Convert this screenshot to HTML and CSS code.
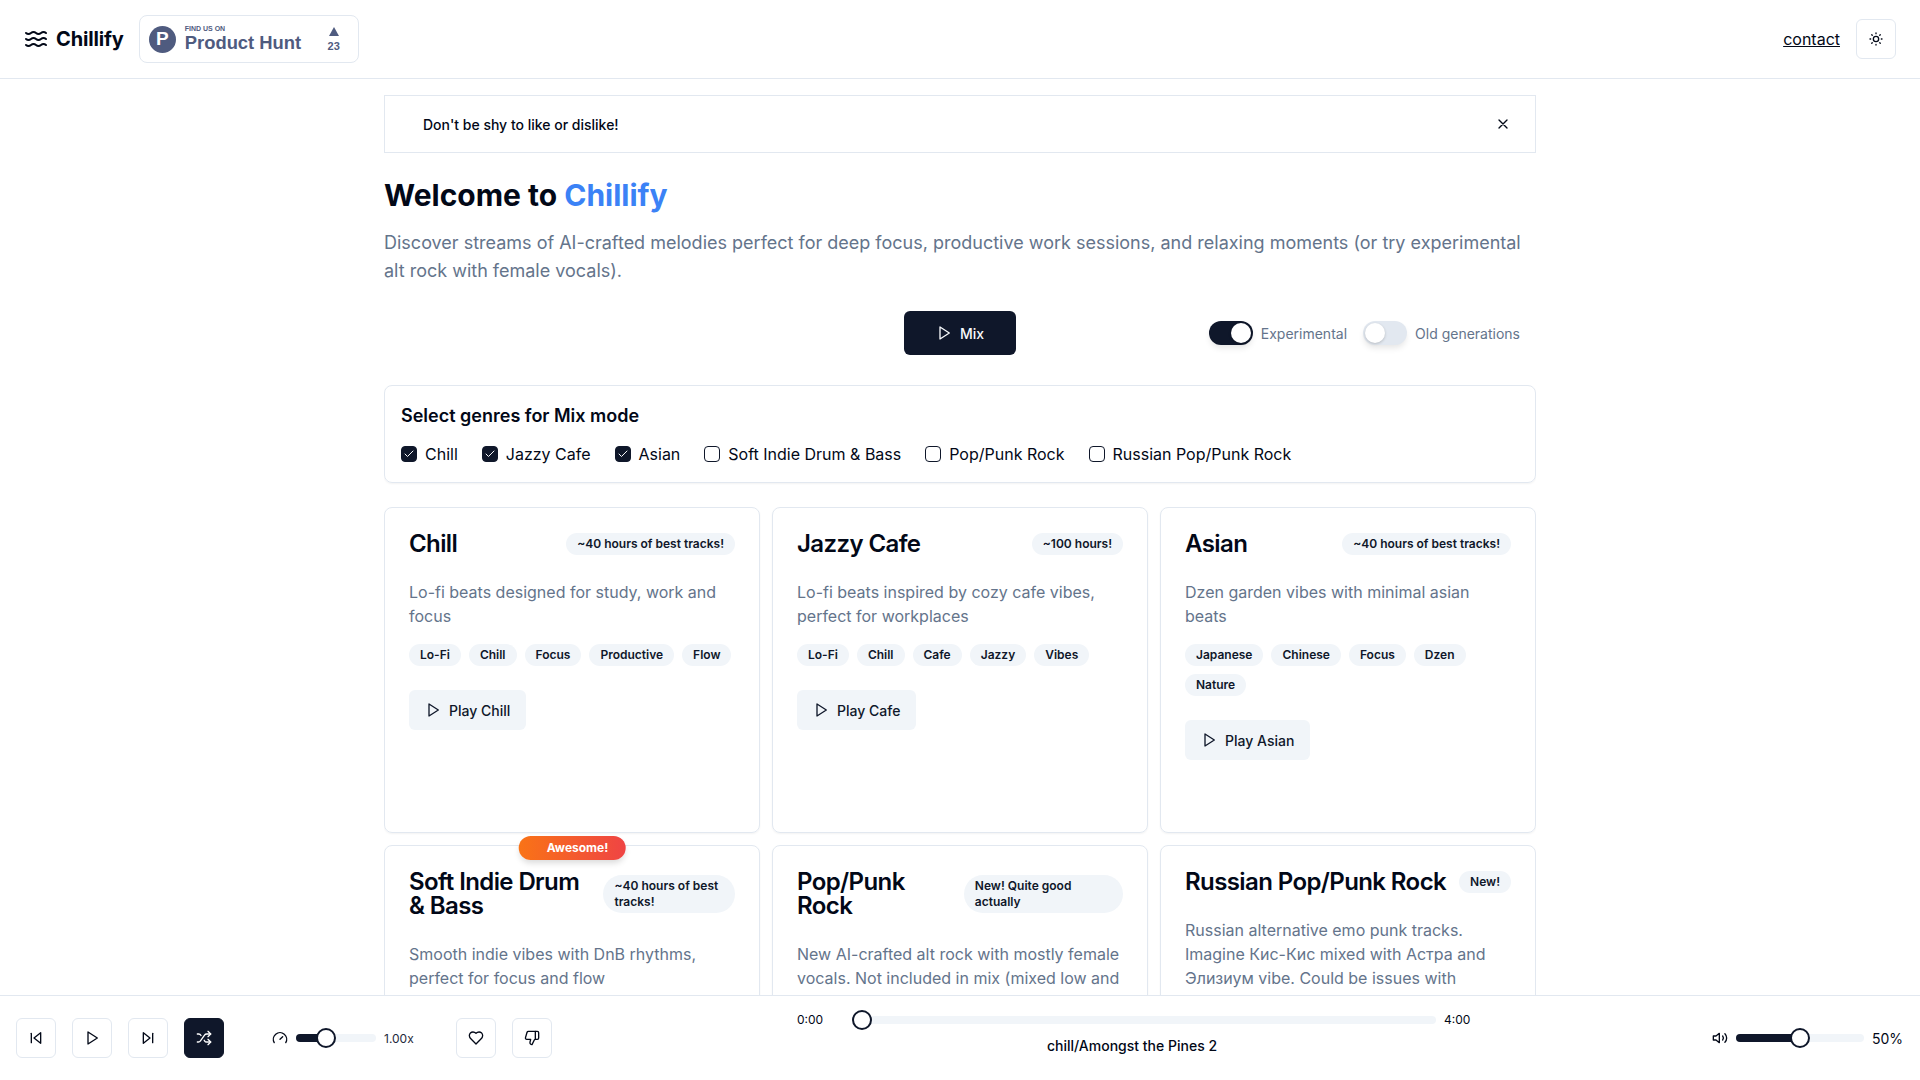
FILE: index.html
```html
<!DOCTYPE html>
<html>
<head>
  <meta charset="utf-8">
  <meta name="viewport" content="width=device-width">
  <title>Chillify</title>
  <link rel="stylesheet" href="styles.css">
</head>
<body>
  <svg class="sprite" aria-hidden="true">
    <symbol id="i-waves" viewBox="0 0 24 24"><path d="M2 6c.6.5 1.2 1 2.5 1C7 7 7 5 9.5 5c2.6 0 2.4 2 5 2 2.5 0 2.5-2 5-2 1.3 0 1.9.5 2.5 1"/><path d="M2 12c.6.5 1.2 1 2.5 1 2.5 0 2.5-2 5-2 2.6 0 2.4 2 5 2 2.5 0 2.5-2 5-2 1.3 0 1.9.5 2.5 1"/><path d="M2 18c.6.5 1.2 1 2.5 1 2.5 0 2.5-2 5-2 2.6 0 2.4 2 5 2 2.5 0 2.5-2 5-2 1.3 0 1.9.5 2.5 1"/></symbol>
    <symbol id="i-sun" viewBox="0 0 24 24"><circle cx="12" cy="12" r="4"/><path d="M12 3v1M12 20v1M3 12h1M20 12h1M5.64 5.64l.7.7M17.66 17.66l.7.7M5.64 18.36l.7-.7M17.66 6.34l.7-.7"/></symbol>
    <symbol id="i-x" viewBox="0 0 24 24"><path d="M18 6 6 18M6 6l12 12"/></symbol>
    <symbol id="i-play" viewBox="0 0 24 24"><polygon points="6 3 20 12 6 21 6 3"/></symbol>
    <symbol id="i-back" viewBox="0 0 24 24"><polygon points="19 20 9 12 19 4 19 20"/><path d="M5 19V5"/></symbol>
    <symbol id="i-next" viewBox="0 0 24 24"><polygon points="5 4 15 12 5 20 5 4"/><path d="M19 5v14"/></symbol>
    <symbol id="i-shuffle" viewBox="0 0 24 24"><path d="M2 18h1.4c1.3 0 2.5-.6 3.3-1.7l6.1-8.6c.7-1.1 2-1.7 3.3-1.7H22"/><path d="m18 2 4 4-4 4"/><path d="M2 6h1.9c1.5 0 2.9.9 3.6 2.2"/><path d="M22 18h-5.9c-1.3 0-2.6-.7-3.3-1.8l-.5-.8"/><path d="m18 14 4 4-4 4"/></symbol>
    <symbol id="i-gauge" viewBox="0 0 24 24"><path d="m12 14 4-4"/><path d="M3.34 19a10 10 0 1 1 17.32 0"/></symbol>
    <symbol id="i-heart" viewBox="0 0 24 24"><path d="M19 14c1.49-1.46 3-3.21 3-5.5A5.5 5.5 0 0 0 16.5 3c-1.76 0-3 .5-4.5 2-1.5-1.5-2.74-2-4.5-2A5.5 5.5 0 0 0 2 8.5c0 2.3 1.5 4.05 3 5.5l7 7Z"/></symbol>
    <symbol id="i-down" viewBox="0 0 24 24"><path d="M17 14V2"/><path d="M9 18.12 10 14H4.17a2 2 0 0 1-1.92-2.56l2.33-8A2 2 0 0 1 6.5 2H20a2 2 0 0 1 2 2v8a2 2 0 0 1-2 2h-2.76a2 2 0 0 0-1.79 1.11L12 22a3.13 3.13 0 0 1-3-3.88Z"/></symbol>
    <symbol id="i-volume" viewBox="0 0 24 24"><polygon points="11 5 6 9 2 9 2 15 6 15 11 19 11 5"/><path d="M16 9a5 5 0 0 1 0 6"/><path d="M19.36 18.36a9 9 0 0 0 0-12.72"/></symbol>
    <symbol id="i-check" viewBox="0 0 24 24"><path d="M20 6 9 17l-5-5"/></symbol>
  </svg>

  <div class="app">
    <header class="topbar">
      <div class="brand-row">
        <a class="brand" href="#"><svg class="icon icon-waves"><use href="#i-waves"/></svg>Chillify</a>
        <a class="ph-badge" href="#">
          <span class="ph-logo">P</span>
          <span class="ph-text"><small>FIND US ON</small><b>Product Hunt</b></span>
          <span class="ph-votes"><i class="ph-arrow"></i>23</span>
        </a>
      </div>
      <div class="top-right">
        <a class="contact" href="#">contact</a>
        <button class="icon-btn"><svg class="icon"><use href="#i-sun"/></svg></button>
      </div>
    </header>

    <main class="content">
      <div class="alert">
        <span>Don't be shy to like or dislike!</span>
        <svg class="icon"><use href="#i-x"/></svg>
      </div>

      <h1 class="welcome">Welcome to <span>Chillify</span></h1>
      <p class="intro">Discover streams of AI-crafted melodies perfect for deep focus, productive work sessions, and relaxing moments (or try experimental alt rock with female vocals).</p>

      <div class="mix-row">
        <div></div>
        <button class="mix-btn"><svg class="icon"><use href="#i-play"/></svg>Mix</button>
        <div class="switches">
          <label class="switch-item"><span class="switch on"><i></i></span>Experimental</label>
          <label class="switch-item"><span class="switch"><i></i></span>Old generations</label>
        </div>
      </div>

      <section class="genres">
        <h2>Select genres for Mix mode</h2>
        <div class="genre-list">
          <label class="genre"><span class="box on"><svg class="icon"><use href="#i-check"/></svg></span>Chill</label>
          <label class="genre"><span class="box on"><svg class="icon"><use href="#i-check"/></svg></span>Jazzy Cafe</label>
          <label class="genre"><span class="box on"><svg class="icon"><use href="#i-check"/></svg></span>Asian</label>
          <label class="genre"><span class="box"></span>Soft Indie Drum &amp; Bass</label>
          <label class="genre"><span class="box"></span>Pop/Punk Rock</label>
          <label class="genre"><span class="box"></span>Russian Pop/Punk Rock</label>
        </div>
      </section>

      <section class="cards">
        <article class="card">
          <div class="card-head"><h3>Chill</h3><span class="pill">~40 hours of best tracks!</span></div>
          <p class="desc">Lo-fi beats designed for study, work and focus</p>
          <div class="tags"><span class="pill">Lo-Fi</span><span class="pill">Chill</span><span class="pill">Focus</span><span class="pill">Productive</span><span class="pill">Flow</span></div>
          <button class="play-btn"><svg class="icon"><use href="#i-play"/></svg>Play Chill</button>
        </article>
        <article class="card">
          <div class="card-head"><h3>Jazzy Cafe</h3><span class="pill">~100 hours!</span></div>
          <p class="desc">Lo-fi beats inspired by cozy cafe vibes, perfect for workplaces</p>
          <div class="tags"><span class="pill">Lo-Fi</span><span class="pill">Chill</span><span class="pill">Cafe</span><span class="pill">Jazzy</span><span class="pill">Vibes</span></div>
          <button class="play-btn"><svg class="icon"><use href="#i-play"/></svg>Play Cafe</button>
        </article>
        <article class="card">
          <div class="card-head"><h3>Asian</h3><span class="pill">~40 hours of best tracks!</span></div>
          <p class="desc">Dzen garden vibes with minimal asian beats</p>
          <div class="tags"><span class="pill">Japanese</span><span class="pill">Chinese</span><span class="pill">Focus</span><span class="pill">Dzen</span><span class="pill">Nature</span></div>
          <button class="play-btn"><svg class="icon"><use href="#i-play"/></svg>Play Asian</button>
        </article>
        <article class="card">
          <span class="awesome">Awesome!</span>
          <div class="card-head"><h3>Soft Indie Drum &amp; Bass</h3><span class="pill">~40 hours of best tracks!</span></div>
          <p class="desc">Smooth indie vibes with DnB rhythms, perfect for focus and flow</p>
        </article>
        <article class="card">
          <div class="card-head"><h3>Pop/Punk Rock</h3><span class="pill">New! Quite good actually</span></div>
          <p class="desc">New AI-crafted alt rock with mostly female vocals. Not included in mix (mixed low and high energy)</p>
        </article>
        <article class="card">
          <div class="card-head"><h3>Russian Pop/Punk Rock</h3><span class="pill">New!</span></div>
          <p class="desc">Russian alternative emo punk tracks. Imagine Кис-Кис mixed with Астра and Элизиум vibe. Could be issues with pronunciation</p>
        </article>
      </section>
    </main>

    <footer class="player">
      <div class="player-left">
        <div class="transport">
          <button class="icon-btn"><svg class="icon"><use href="#i-back"/></svg></button>
          <button class="icon-btn"><svg class="icon"><use href="#i-play"/></svg></button>
          <button class="icon-btn"><svg class="icon"><use href="#i-next"/></svg></button>
          <button class="icon-btn active"><svg class="icon"><use href="#i-shuffle"/></svg></button>
        </div>
        <div class="speed">
          <svg class="icon"><use href="#i-gauge"/></svg>
          <div class="slider slider-speed"><div class="fill" style="width: 37%"></div><i class="thumb" style="left: 37%"></i></div>
          <span class="small-val">1.00x</span>
        </div>
        <div class="votes">
          <button class="icon-btn"><svg class="icon"><use href="#i-heart"/></svg></button>
          <button class="icon-btn"><svg class="icon"><use href="#i-down"/></svg></button>
        </div>
      </div>

      <div class="now">
        <div class="progress">
          <span class="time time-start">0:00</span>
          <div class="slider slider-progress"><i class="thumb" style="left: 9px"></i></div>
          <span class="time">4:00</span>
        </div>
        <div class="track-name">chill/Amongst the Pines 2</div>
      </div>

      <div class="volume">
        <svg class="icon"><use href="#i-volume"/></svg>
        <div class="slider slider-volume"><div class="fill" style="width: 50%"></div><i class="thumb" style="left: 50%"></i></div>
        <span class="vol-val">50%</span>
      </div>
    </footer>
  </div>
</body>
</html>
```

FILE: styles.css
```css
*{
  box-sizing: border-box;
}
html,body{
  margin: 0;
  height: 100%;
}
body{
  font-family: Inter, "Noto Sans", sans-serif;
  color: #020817;
  background: #fff;
}
a{
  color: inherit;
  text-decoration: none;
}
button{
  font-family: inherit;
  cursor: pointer;
}
h1,h2,h3,p{
  margin: 0;
}
.sprite{
  display: none;
}
.icon{
  width: 16px;
  height: 16px;
  flex: none;
  fill: none;
  stroke: currentColor;
  stroke-width: 2;
  stroke-linecap: round;
  stroke-linejoin: round;
}
.app{
  display: flex;
  flex-direction: column;
  height: 100vh;
  overflow: hidden;
}

/* top bar */
.topbar{
  display: flex;
  flex: none;
  align-items: center;
  justify-content: space-between;
  height: 79px;
  padding: 0 24px;
  border-bottom: 1px solid #e2e8f0;
}
.brand-row{
  display: flex;
  align-items: center;
  gap: 15px;
}
.brand{
  display: flex;
  align-items: center;
  gap: 8px;
  font-size: 20px;
  font-weight: 700;
  letter-spacing: -.15px;
}
.icon-waves{
  width: 24px;
  height: 24px;
}
.ph-badge{
  display: flex;
  align-items: center;
  width: 220px;
  height: 48px;
  padding: 0 9px;
  border: 1px solid #e2e8f0;
  border-radius: 8px;
  color: #4f5b7f;
  font-family: "Liberation Sans", sans-serif;
}
.ph-logo{
  display: flex;
  align-items: center;
  justify-content: center;
  width: 27px;
  height: 27px;
  margin-right: 9px;
  border-radius: 50%;
  background: #4f5b7f;
  color: #fff;
  font-size: 19px;
  font-weight: 700;
}
.ph-text{
  display: flex;
  flex: 1;
  flex-direction: column;
  line-height: 1;
}
.ph-text small{
  font-size: 7px;
  font-weight: 700;
}
.ph-text b{
  font-size: 18.4px;
  margin-top: 2px;
}
.ph-votes{
  display: flex;
  flex-direction: column;
  align-items: center;
  gap: 4px;
  width: 20px;
  margin-right: 5px;
  font-size: 11px;
  font-weight: 700;
}
.ph-arrow{
  width: 0;
  height: 0;
  border-left: 5px solid transparent;
  border-right: 5px solid transparent;
  border-bottom: 9px solid #4f5b7f;
}
.top-right{
  display: flex;
  align-items: center;
  gap: 16px;
}
.contact{
  font-size: 16px;
  text-decoration: underline;
}
.icon-btn{
  display: flex;
  align-items: center;
  justify-content: center;
  width: 40px;
  height: 40px;
  padding: 0;
  border: 1px solid #e2e8f0;
  border-radius: 6px;
  background: #fff;
  color: #020817;
}
.icon-btn.active{
  background: #0f172a;
  border-color: #0f172a;
  color: #fff;
}

/* main column */
.content{
  flex: 1;
  min-height: 0;
  width: 1152px;
  margin: 0 auto;
  padding-top: 16px;
  overflow: hidden;
}
.alert{
  display: flex;
  align-items: center;
  justify-content: space-between;
  height: 58px;
  padding: 0 24px 0 38px;
  border: 1px solid #e2e8f0;
  font-size: 14px;
  font-weight: 500;
}
.welcome{
  margin-top: 24px;
  font-size: 30px;
  line-height: 36px;
  font-weight: 700;
}
.welcome span{
  color: #3b82f6;
}
.intro{
  margin-top: 16px;
  font-size: 18px;
  line-height: 28px;
  color: #64748b;
}
.mix-row{
  display: grid;
  grid-template-columns: 1fr 112px 1fr;
  align-items: center;
  margin-top: 26px;
}
.mix-btn{
  display: flex;
  align-items: center;
  justify-content: center;
  gap: 8px;
  height: 44px;
  border: 0;
  border-radius: 6px;
  background: #0f172a;
  color: #f8fafc;
  font-size: 14px;
  font-weight: 500;
}
.switches{
  display: flex;
  justify-content: flex-end;
  gap: 16px;
  padding-right: 16px;
}
.switch-item{
  display: flex;
  align-items: center;
  gap: 8px;
  font-size: 14px;
  color: #64748b;
}
.switch{
  display: flex;
  width: 44px;
  height: 24px;
  padding: 2px;
  border-radius: 12px;
  background: #e2e8f0;
  box-shadow: 0 4px 6px -1px rgba(0,0,0,.1);
}
.switch i{
  width: 20px;
  height: 20px;
  border-radius: 50%;
  background: #fff;
  box-shadow: 0 1px 3px rgba(0,0,0,.2);
}
.switch.on{
  justify-content: flex-end;
  background: #0f172a;
}
.genres{
  margin-top: 30px;
  height: 98px;
  padding: 16px;
  border: 1px solid #e2e8f0;
  border-radius: 8px;
  box-shadow: 0 1px 2px rgba(0,0,0,.05);
}
.genres h2{
  font-size: 18px;
  line-height: 28px;
  font-weight: 600;
}
.genre-list{
  display: flex;
  gap: 24px;
  margin-top: 12px;
}
.genre{
  display: flex;
  align-items: center;
  gap: 8px;
  height: 24px;
  font-size: 16px;
}
.box{
  display: flex;
  align-items: center;
  justify-content: center;
  width: 16px;
  height: 16px;
  border: 1px solid #0f172a;
  border-radius: 4px;
}
.box.on{
  background: #0f172a;
  color: #f8fafc;
}
.box .icon{
  width: 12px;
  height: 12px;
}

/* genre cards */
.cards{
  display: grid;
  grid-template-columns: repeat(3, 1fr);
  grid-auto-rows: 326px;
  gap: 12px;
  margin-top: 24px;
}
.card{
  position: relative;
  padding: 24px;
  border: 1px solid #e2e8f0;
  border-radius: 8px;
  box-shadow: 0 1px 2px rgba(0,0,0,.05);
}
.card-head{
  display: flex;
  align-items: center;
  justify-content: space-between;
  gap: 8px;
}
.card-head h3{
  font-size: 24px;
  line-height: 24px;
  font-weight: 600;
  letter-spacing: -.6px;
}
.pill{
  padding: 3px 11px;
  border-radius: 19px;
  background: #f1f5f9;
  color: #0f172a;
  font-size: 12px;
  line-height: 16px;
  font-weight: 600;
}
.desc{
  margin-top: 24px;
  font-size: 16px;
  line-height: 24px;
  color: #64748b;
}
.tags{
  display: flex;
  flex-wrap: wrap;
  gap: 8px;
  margin-top: 16px;
}
.play-btn{
  display: flex;
  align-items: center;
  gap: 8px;
  height: 40px;
  margin-top: 24px;
  padding: 0 16px;
  border: 0;
  border-radius: 6px;
  background: #f1f5f9;
  color: #0f172a;
  font-size: 14px;
  font-weight: 500;
}
.awesome{
  position: absolute;
  top: -10px;
  left: 50%;
  transform: translateX(-50%);
  padding: 4px 17px 4px 28px;
  border-radius: 12px;
  background: linear-gradient(to right, #f97316, #ef4444);
  box-shadow: 0 4px 6px -1px rgba(0,0,0,.15);
  color: #fff;
  font-size: 12px;
  line-height: 16px;
  font-weight: 700;
  white-space: nowrap;
}

/* player */
.player{
  display: flex;
  flex: none;
  align-items: center;
  justify-content: space-between;
  height: 85px;
  padding: 0 16px;
  border-top: 1px solid #e2e8f0;
  background: #fff;
}
.player-left{
  display: flex;
  align-items: center;
}
.transport{
  display: flex;
  gap: 16px;
}
.speed{
  display: flex;
  align-items: center;
  gap: 8px;
  margin-left: 48px;
}
.votes{
  display: flex;
  gap: 16px;
  margin-left: 41px;
}
.slider{
  position: relative;
  height: 8px;
  border-radius: 4px;
  background: #f1f5f9;
}
.fill{
  height: 100%;
  border-radius: 4px 0 0 4px;
  background: #0f172a;
}
.thumb{
  position: absolute;
  top: 50%;
  width: 20px;
  height: 20px;
  border: 2px solid #0f172a;
  border-radius: 50%;
  background: #fff;
  transform: translate(-50%, -50%);
}
.slider-speed{
  width: 80px;
}
.small-val{
  width: 31px;
  margin-left: 0;
  font-size: 12px;
  color: #1e293b;
}
.now{
  width: 674px;
  margin: 0 0 11px 4px;
}
.progress{
  display: flex;
  align-items: center;
  gap: 8px;
  height: 20px;
}
.time{
  width: 27px;
  font-size: 12px;
}
.time-start{
  width: 48px;
}
.slider-progress{
  flex: 1;
}
.track-name{
  margin-top: 6px;
  padding-right: 4px;
  font-size: 14px;
  line-height: 20px;
  font-weight: 500;
  text-align: center;
}
.volume{
  display: flex;
  align-items: center;
  gap: 8px;
}
.slider-volume{
  width: 128px;
}
.vol-val{
  width: 32px;
  font-size: 14px;
}
```
